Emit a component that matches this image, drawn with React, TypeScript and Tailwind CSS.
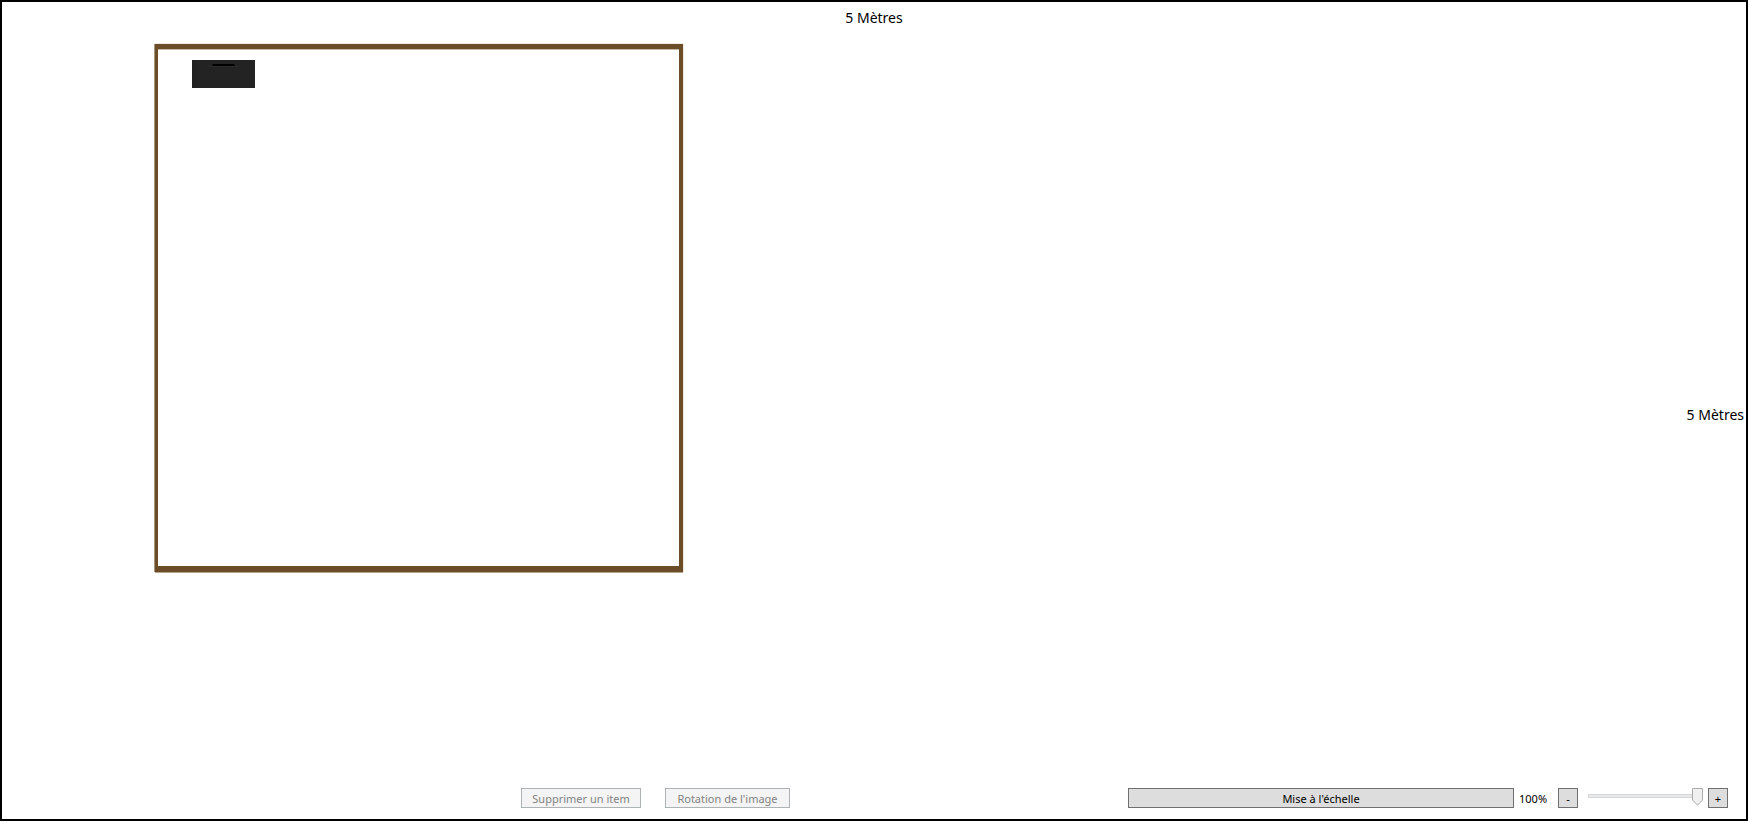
import { useState } from "react";

const buttonBase = "h-5 border pt-[2px] text-center text-[11px] leading-4";
const disabledButton = `${buttonBase} border-[#adb2b5] bg-[#f4f4f4] text-[#838383]`;
const activeButton = `${buttonBase} border-[#707070] bg-[#dddddd] text-black`;

function Room() {
  return (
    <div className="absolute left-[153px] top-1 h-[528px] w-[528px] border-x-4 border-t-[5px] border-b-[6px] border-l-[3px] border-[#6b4e28] shadow-[0_1px_0_#b5a48c,-1px_0_0_#a89880,1px_0_0_#f0e9df,0_-1px_0_#efe9e0,inset_0_1px_0_#c4b8a8]">
      <svg className="absolute left-[34px] top-[11px] h-7 w-[63px]" viewBox="0 0 63 28" aria-label="Meuble">
        <rect width="63" height="28" fill="#232323" />
        <path d="M0 0H4V28H0Z" fill="#202020" />
        <path d="M17 6.5H46" stroke="#2c2c2c" />
        <path d="M21 4H42L43 6H20Z" fill="#000" />
      </svg>
    </div>
  );
}

function ZoomSlider({ value, onChange }: { value: number; onChange: (v: number) => void }) {
  return (
    <div className="relative h-5 w-[115px]">
      <input
        type="range"
        min={10}
        max={100}
        value={value}
        onChange={(e) => onChange(Number(e.target.value))}
        aria-label="Zoom"
        className="block h-[18px] w-full appearance-none bg-transparent pt-[2px] pb-[4px] [&::-webkit-slider-runnable-track]:h-1 [&::-webkit-slider-runnable-track]:border [&::-webkit-slider-runnable-track]:border-[#d6d6d6] [&::-webkit-slider-runnable-track]:bg-[#e7eaea] [&::-webkit-slider-thumb]:-mt-2 [&::-webkit-slider-thumb]:h-[18px] [&::-webkit-slider-thumb]:w-[11px] [&::-webkit-slider-thumb]:appearance-none [&::-webkit-slider-thumb]:opacity-0"
      />
      <svg
        className="pointer-events-none absolute top-0 h-[18px] w-[11px]"
        style={{ left: ((value - 10) / 90) * 104 }}
        viewBox="0 0 11 18"
        aria-hidden="true"
      >
        <path d="M.5 .5H10.5V12L5.5 17.2L.5 12Z" fill="#f0f0f0" stroke="#acacac" />
      </svg>
    </div>
  );
}

export default function App() {
  const [zoom, setZoom] = useState(100);
  const step = (delta: number) => setZoom((z) => Math.min(100, Math.max(10, z + delta)));

  return (
    <main className="flex h-screen flex-col border-2 border-black bg-white font-['Noto_Sans',sans-serif] text-black">
      <header className="flex h-[38px] shrink-0 justify-center pt-1 text-sm leading-6">5 Mètres</header>

      <section className="flex min-h-0 flex-1 items-center">
        <div className="relative flex-1 self-stretch">
          <Room />
        </div>
        <span className="pt-[2px] pr-[2px] text-sm leading-6">5 Mètres</span>
      </section>

      <footer className="grid shrink-0 grid-cols-[788fr_338fr_618fr] pb-[11px]">
        <div className="flex justify-end gap-6">
          <button type="button" disabled className={`${disabledButton} w-[120px]`}>
            Supprimer un item
          </button>
          <button type="button" disabled className={`${disabledButton} w-[125px]`}>
            Rotation de l'image
          </button>
        </div>
        <div className="col-start-3 flex items-center pr-[18px]">
          <button type="button" onClick={() => setZoom(100)} className={`${activeButton} flex-1`}>
            Mise à l'échelle
          </button>
          <output className="h-5 w-11 pt-[3px] pl-[5px] text-[11px] leading-4">{zoom}%</output>
          <button type="button" onClick={() => step(-10)} aria-label="Zoom arrière" className={`${activeButton} mr-[10px] w-5`}>
            -
          </button>
          <ZoomSlider value={zoom} onChange={setZoom} />
          <button type="button" onClick={() => step(10)} aria-label="Zoom avant" className={`${activeButton} ml-[5px] w-5`}>
            +
          </button>
        </div>
      </footer>
    </main>
  );
}
